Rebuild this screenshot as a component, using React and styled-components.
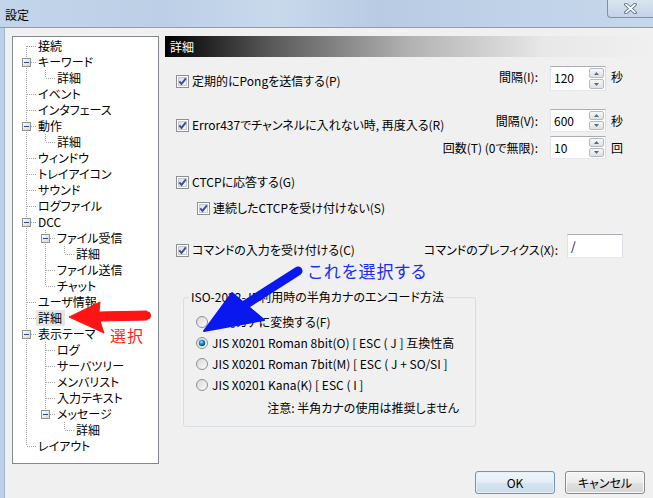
import React from "react";
import styled, { createGlobalStyle } from "styled-components";

const GlobalStyle = createGlobalStyle`
  html, body {
    margin: 0;
    padding: 0;
    background: #f0f0f0;
  }
  body {
    font-family: "Noto Sans CJK JP", "Noto Sans", sans-serif;
    font-size: 12px;
    color: #000;
  }
`;

const Window = styled.div`
  position: relative;
  width: 653px;
  height: 498px;
  display: flex;
  flex-direction: column;
  overflow: hidden;
  background: #f0f0f0;
  line-height: 16px;
  font-feature-settings: "palt" 1;
`;

const TitleBar = styled.div`
  height: 27px;
  flex-shrink: 0;
  display: flex;
  align-items: flex-start;
  border-bottom: 1px solid #8b9db5;
  background: linear-gradient(
    90deg,
    #c3d5ea 0%,
    #bccfe6 25%,
    #c9d9ec 42%,
    #b8cbe3 58%,
    #c0d2e8 78%,
    #c6d7eb 100%
  );
`;

const Caption = styled.div`
  padding: 7px 0 0 5px;
  font-size: 12px;
  color: #000;
`;

const CloseButton = styled.div`
  margin-left: auto;
  width: 45px;
  height: 17px;
  display: flex;
  align-items: center;
  justify-content: center;
  border: 1px solid #7e91a9;
  border-top: none;
  border-right: none;
  border-radius: 0 0 0 4px;
  background: linear-gradient(#d9e5f1, #c3d3e6);
`;

const Client = styled.div`
  flex: 1;
  display: flex;
  flex-direction: column;
  padding: 8px 0 0 8px;
  border-left: 4px solid #bcd0e7;
  box-shadow: inset 1px 0 0 #a3b5ca;
`;

const ContentRow = styled.div`
  height: 428px;
  display: flex;
  gap: 6px;
`;

/* tree on the left */
const Tree = styled.div`
  width: 147px;
  height: 428px;
  box-sizing: border-box;
  border: 1px solid #828790;
  background: #fff;
  padding: 1px 0 0 4px;
`;

const TreeRow = styled.div`
  height: 16px;
  display: flex;
  align-items: center;
  svg {
    display: block;
    flex-shrink: 0;
  }
`;

const TreeLabel = styled.span`
  padding: 0 3px 0 2px;
  height: 16px;
  white-space: nowrap;
  background: ${(p) => (p.$selected ? "#e6e6e6" : "transparent")};
`;

/* settings panel */
const Panel = styled.div`
  flex: 1;
  display: flex;
  flex-direction: column;
`;

const PanelHeader = styled.div`
  height: 21px;
  display: flex;
  align-items: center;
  padding-left: 5px;
  color: #fff;
  background: linear-gradient(
    to right,
    #000 0%,
    #5a5a5a 22%,
    #b2b2b2 50%,
    #e8e8e8 78%,
    #f0f0f0 100%
  );
`;

const Form = styled.div`
  display: flex;
  flex-direction: column;
  padding: 0 28px 0 11px;
`;

const Line = styled.div`
  display: flex;
  align-items: flex-start;
  height: ${(p) => p.$h}px;
  margin-top: ${(p) => p.$mt}px;
  padding-left: ${(p) => p.$indent || 0}px;
`;

const CheckItem = styled.label`
  display: flex;
  align-items: center;
  gap: 3px;
  height: 16px;
  margin-top: ${(p) => p.$mt || 0}px;
  margin-right: auto;
  white-space: nowrap;
  svg {
    display: block;
  }
`;

const FieldLabel = styled.span`
  margin-top: ${(p) => p.$mt}px;
  margin-right: ${(p) => p.$gap}px;
  margin-left: ${(p) => (p.$push ? "auto" : "0")};
  white-space: nowrap;
`;

const Unit = styled.span`
  width: 14px;
  margin-left: 5px;
  margin-top: ${(p) => p.$mt}px;
`;

const Field = styled.div`
  width: 56px;
  height: ${(p) => p.$h}px;
  box-sizing: border-box;
  display: flex;
  border: 1px solid;
  border-color: #abadb3 #dbdfe6 #e3e9ef #e2e3ea;
  background: #fff;
  margin-right: ${(p) => p.$mr || 0}px;
`;

const FieldText = styled.div`
  flex: 1;
  padding: 3px 0 0 3px;
`;

const SpinButtons = styled.div`
  width: 17px;
  display: flex;
  flex-direction: column;
  gap: 1px;
  padding: 1px;
  box-sizing: border-box;
`;

const SpinButton = styled.div`
  flex: 1;
  display: flex;
  align-items: center;
  justify-content: center;
  border: 1px solid #b6b9be;
  border-radius: 2px;
  background: linear-gradient(#f7f7f7, #e1e1e1);
`;

const GroupBox = styled.fieldset`
  margin: 31px 0 0 7px;
  padding: 6px 16px 10px 12px;
  width: 293px;
  box-sizing: border-box;
  border: 1px solid #d5dfe5;
  border-radius: 3px;
  min-inline-size: 0;
`;

const Legend = styled.legend`
  margin-left: -7px;
  padding: 0 2px;
  line-height: 16px;
  white-space: nowrap;
`;

const RadioItem = styled.label`
  display: flex;
  align-items: center;
  gap: 4px;
  height: 21px;
  white-space: nowrap;
  svg {
    display: block;
  }
`;

const Caution = styled.div`
  margin-top: 5px;
  text-align: right;
`;

const ButtonRow = styled.div`
  display: flex;
  justify-content: flex-end;
  gap: 10px;
  padding: 7px 8px 0 0;
`;

const DialogButton = styled.div`
  width: 80px;
  height: 23px;
  box-sizing: border-box;
  display: flex;
  align-items: center;
  justify-content: center;
  border: 1px solid ${(p) => (p.$default ? "#6f94b4" : "#8a8a8a")};
  border-radius: 3px;
  box-shadow: inset 0 0 0 1px ${(p) => (p.$default ? "#e4eff8" : "#fbfbfb")};
  background: ${(p) =>
    p.$default
      ? "linear-gradient(#eef4fa 0%, #e4edf6 50%, #d6e4f0 51%, #cadcec 100%)"
      : "linear-gradient(#f4f4f4 0%, #ececec 50%, #e0e0e0 51%, #d6d6d6 100%)"};
`;

/* hand drawn marks over the dialog */
const Marks = styled.svg`
  position: absolute;
  left: 0;
  top: 0;
  pointer-events: none;
`;

const Callout = styled.span`
  position: absolute;
  left: ${(p) => p.$x}px;
  top: ${(p) => p.$y}px;
  font-size: ${(p) => p.$size}px;
  line-height: 1;
  color: ${(p) => p.$color};
  white-space: nowrap;
  letter-spacing: 1px;
`;

const tree = [
  { label: "接続" },
  { label: "キーワード", children: [{ label: "詳細" }] },
  { label: "イベント" },
  { label: "インタフェース" },
  { label: "動作", children: [{ label: "詳細" }] },
  { label: "ウィンドウ" },
  { label: "トレイアイコン" },
  { label: "サウンド" },
  { label: "ログファイル" },
  {
    label: "DCC",
    children: [
      { label: "ファイル受信", children: [{ label: "詳細" }] },
      { label: "ファイル送信" },
      { label: "チャット" },
    ],
  },
  { label: "ユーザ情報" },
  { label: "詳細", selected: true },
  {
    label: "表示テーマ",
    children: [
      { label: "ログ" },
      { label: "サーバツリー" },
      { label: "メンバリスト" },
      { label: "入力テキスト" },
      { label: "メッセージ", children: [{ label: "詳細" }] },
    ],
  },
  { label: "レイアウト" },
];

function flatten(nodes, guides = [], out = []) {
  nodes.forEach((n, i) => {
    const last = i === nodes.length - 1;
    out.push({
      label: n.label,
      selected: n.selected,
      guides,
      last,
      first: guides.length === 0 && i === 0,
      open: !!n.children,
    });
    if (n.children) flatten(n.children, [...guides, !last], out);
  });
  return out;
}

const LINE = "#a0a0a0";

function Guide({ on }) {
  return (
    <svg width="19" height="16">
      {on && (
        <line x1="9.5" y1="0" x2="9.5" y2="16" stroke={LINE} strokeDasharray="1 1" />
      )}
    </svg>
  );
}

function Connector({ first, last, open }) {
  return (
    <svg width="19" height="16">
      <g stroke={LINE} strokeDasharray="1 1">
        <line x1="9.5" y1={first ? 8 : 0} x2="9.5" y2={last ? 8 : 16} />
        <line x1={open ? 14 : 10} y1="8.5" x2="19" y2="8.5" />
      </g>
      {open && (
        <g>
          <defs>
            <linearGradient id="expander" x1="0" y1="0" x2="1" y2="1">
              <stop offset="0" stopColor="#ffffff" />
              <stop offset="1" stopColor="#d4d4d4" />
            </linearGradient>
          </defs>
          <rect x="5.5" y="4.5" width="8" height="8" fill="url(#expander)" stroke="#919191" />
          <rect x="7" y="8" width="5" height="1" fill="#2a48a0" />
        </g>
      )}
    </svg>
  );
}

function CheckBox() {
  return (
    <svg width="13" height="13" viewBox="0 0 13 13">
      <defs>
        <linearGradient id="checkFill" x1="0" y1="0" x2="1" y2="1">
          <stop offset="0" stopColor="#d9dce2" />
          <stop offset="1" stopColor="#fbfbfb" />
        </linearGradient>
      </defs>
      <rect x="0.5" y="0.5" width="12" height="12" fill="#fff" stroke="#8e8f8f" />
      <rect x="2.5" y="2.5" width="8" height="8" fill="url(#checkFill)" stroke="#c6cad1" />
      <path d="M3.3 6.3 L5.5 8.9 L9.9 3.4" fill="none" stroke="#3a4f9a" strokeWidth="1.9" />
    </svg>
  );
}

function Radio({ on }) {
  return (
    <svg width="12" height="12" viewBox="0 0 12 12">
      <defs>
        <linearGradient id="radioFill" x1="0" y1="0" x2="1" y2="1">
          <stop offset="0" stopColor="#d6d6d6" />
          <stop offset="1" stopColor="#fdfdfd" />
        </linearGradient>
        <radialGradient id="radioDot" cx="0.4" cy="0.35" r="0.65">
          <stop offset="0" stopColor="#a8e6ff" />
          <stop offset="0.45" stopColor="#1f8fd2" />
          <stop offset="1" stopColor="#0a4a80" />
        </radialGradient>
      </defs>
      <circle cx="6" cy="6" r="5.5" fill="url(#radioFill)" stroke="#8e8f8f" />
      {on && <circle cx="6" cy="6" r="3.2" fill="url(#radioDot)" />}
    </svg>
  );
}

function Spin({ value, h }) {
  return (
    <Field $h={h}>
      <FieldText>{value}</FieldText>
      <SpinButtons>
        <SpinButton>
          <svg width="5" height="3">
            <path d="M0 3 L2.5 0 L5 3Z" fill="#4f6b93" />
          </svg>
        </SpinButton>
        <SpinButton>
          <svg width="5" height="3">
            <path d="M0 0 L5 0 L2.5 3Z" fill="#4f6b93" />
          </svg>
        </SpinButton>
      </SpinButtons>
    </Field>
  );
}

export default function App() {
  const rows = flatten(tree);

  return (
    <>
      <GlobalStyle />
      <Window>
        <TitleBar>
          <Caption>設定</Caption>
          <CloseButton>
            <svg width="13" height="11" viewBox="0 0 13 11">
              <path d="M2 1.5 L11 9.5 M11 1.5 L2 9.5" stroke="#56677d" strokeWidth="3.6" strokeLinecap="round" />
              <path d="M2 1.5 L11 9.5 M11 1.5 L2 9.5" stroke="#ffffff" strokeWidth="1.8" strokeLinecap="round" />
            </svg>
          </CloseButton>
        </TitleBar>

        <Client>
          <ContentRow>
            <Tree>
              {rows.map((r, i) => (
                <TreeRow key={i}>
                  {r.guides.map((g, j) => (
                    <Guide key={j} on={g} />
                  ))}
                  <Connector first={r.first} last={r.last} open={r.open} />
                  <TreeLabel $selected={r.selected}>{r.label}</TreeLabel>
                </TreeRow>
              ))}
            </Tree>

            <Panel>
              <PanelHeader>詳細</PanelHeader>
              <Form>
                <Line $mt={9} $h={25}>
                  <CheckItem $mt={7}>
                    <CheckBox />
                    定期的にPongを送信する(P)
                  </CheckItem>
                  <FieldLabel $mt={3} $gap={12}>間隔(I):</FieldLabel>
                  <Spin value="120" h={25} />
                  <Unit $mt={3}>秒</Unit>
                </Line>

                <Line $mt={18} $h={23}>
                  <CheckItem $mt={8}>
                    <CheckBox />
                    Error437でチャンネルに入れない時, 再度入る(R)
                  </CheckItem>
                  <FieldLabel $mt={4} $gap={12}>間隔(V):</FieldLabel>
                  <Spin value="600" h={23} />
                  <Unit $mt={4}>秒</Unit>
                </Line>

                <Line $mt={4} $h={23}>
                  <FieldLabel $mt={4} $gap={12} $push>
                    回数(T) (0で無限):
                  </FieldLabel>
                  <Spin value="10" h={23} />
                  <Unit $mt={4}>回</Unit>
                </Line>

                <Line $mt={15} $h={16}>
                  <CheckItem>
                    <CheckBox />
                    CTCPに応答する(G)
                  </CheckItem>
                </Line>

                <Line $mt={10} $h={16} $indent={21}>
                  <CheckItem>
                    <CheckBox />
                    連続したCTCPを受け付けない(S)
                  </CheckItem>
                </Line>

                <Line $mt={18} $h={24}>
                  <CheckItem $mt={8}>
                    <CheckBox />
                    コマンドの入力を受け付ける(C)
                  </CheckItem>
                  <FieldLabel $mt={8} $gap={9}>コマンドのプレフィクス(X):</FieldLabel>
                  <Field $h={24} $mr={2}>
                    <FieldText>/</FieldText>
                  </Field>
                </Line>

                <GroupBox>
                  <Legend>ISO-2022-JP利用時の半角カナのエンコード方法</Legend>
                  <RadioItem>
                    <Radio />
                    全角カナに変換する(F)
                  </RadioItem>
                  <RadioItem>
                    <Radio on />
                    JIS X0201 Roman 8bit(O) [ ESC ( J ] 互換性高
                  </RadioItem>
                  <RadioItem>
                    <Radio />
                    JIS X0201 Roman 7bit(M) [ ESC ( J + SO/SI ]
                  </RadioItem>
                  <RadioItem>
                    <Radio />
                    JIS X0201 Kana(K) [ ESC ( I ]
                  </RadioItem>
                  <Caution>注意: 半角カナの使用は推奨しません</Caution>
                </GroupBox>
              </Form>
            </Panel>
          </ContentRow>

          <ButtonRow>
            <DialogButton $default>OK</DialogButton>
            <DialogButton>キャンセル</DialogButton>
          </ButtonRow>
        </Client>

        <Marks width="653" height="498" viewBox="0 0 653 498">
          <g fill="#ff1414" stroke="#ff1414" strokeLinejoin="round">
            <path d="M69 317 L100 302 L99 312 L147 311 L147 320 L100 321 L104 333 Z" strokeWidth="1" />
            <line x1="100" y1="316" x2="147" y2="315.5" strokeWidth="8" strokeLinecap="round" />
          </g>
          <g fill="#0a18f0" stroke="#0a18f0" strokeLinejoin="round">
            <line x1="298" y1="271" x2="240" y2="308" strokeWidth="9" strokeLinecap="round" />
            <path d="M204 331 L232 293 L264 320 Z" strokeWidth="2" />
          </g>
        </Marks>
        <Callout $x={110} $y={327} $size={16} $color="#ff1f1f">
          選択
        </Callout>
        <Callout $x={308} $y={262} $size={17} $color="#1a2ef0">
          これを選択する
        </Callout>
      </Window>
    </>
  );
}
